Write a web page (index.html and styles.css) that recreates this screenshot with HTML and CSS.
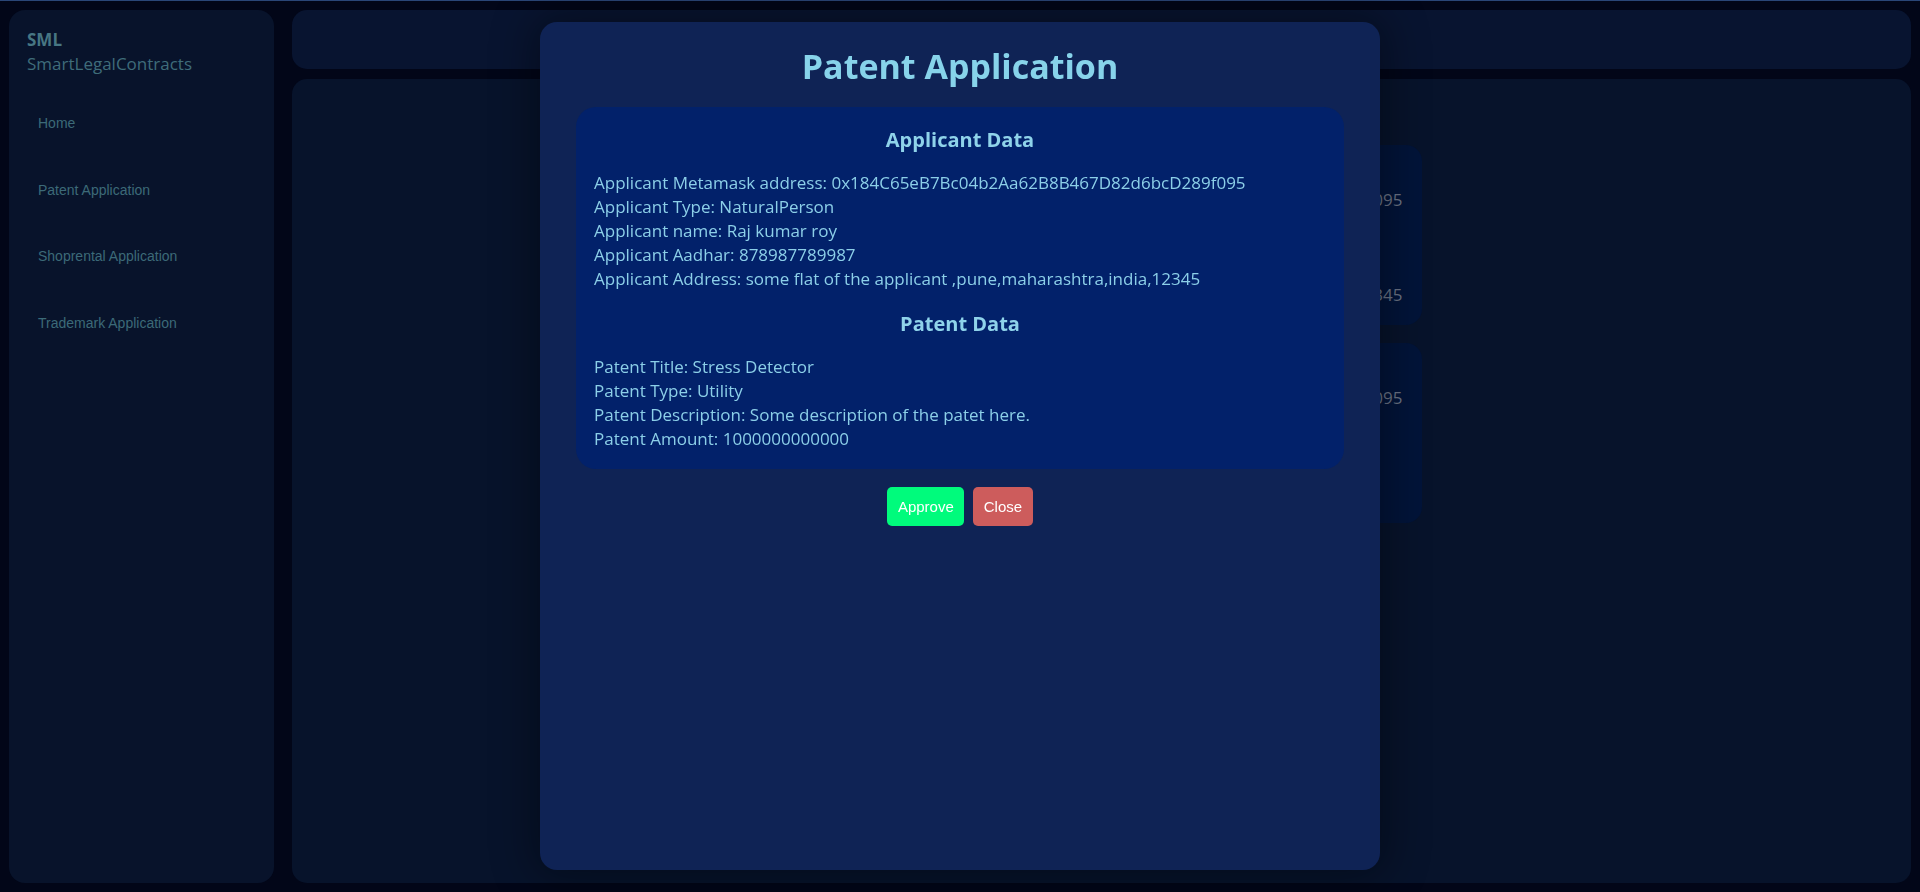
FILE: index.html
```html
<!DOCTYPE html>
<html lang="en">
<head>
<meta charset="utf-8">
<title>SmartLegalContracts</title>
<link rel="stylesheet" href="styles.css">
</head>
<body>
<div class="topline"></div>
<div class="app">
  <aside class="sidebar">
    <div class="brand">
      <div class="brand-short">SML</div>
      <div class="brand-long">SmartLegalContracts</div>
    </div>
    <nav class="nav">
      <a class="nav-item">Home</a>
      <a class="nav-item">Patent Application</a>
      <a class="nav-item">Shoprental Application</a>
      <a class="nav-item">Trademark Application</a>
    </nav>
  </aside>
  <div class="maincol">
    <header class="topbar"></header>
    <main class="panel">
      <div class="cards">
        <div class="card">
          <div class="card-row"><span>0x184C65eB7Bc04b2Aa62B8B467D82d6bcD289f095</span></div>
          <div class="card-gap"></div>
          <div class="card-row"><span>pune,maharashtra,india,12345</span></div>
        </div>
        <div class="card">
          <div class="card-row"><span>0x184C65eB7Bc04b2Aa62B8B467D82d6bcD289f095</span></div>
        </div>
      </div>
    </main>
  </div>
</div>

<div class="overlay">
  <div class="modal">
    <h1 class="modal-title">Patent Application</h1>
    <div class="data-box">
      <h3 class="section-title">Applicant Data</h3>
      <p class="line">Applicant Metamask address: 0x184C65eB7Bc04b2Aa62B8B467D82d6bcD289f095</p>
      <p class="line">Applicant Type: NaturalPerson</p>
      <p class="line">Applicant name: Raj kumar roy</p>
      <p class="line">Applicant Aadhar: 878987789987</p>
      <p class="line">Applicant Address: some flat of the applicant ,pune,maharashtra,india,12345</p>
      <h3 class="section-title second">Patent Data</h3>
      <p class="line">Patent Title: Stress Detector</p>
      <p class="line">Patent Type: Utility</p>
      <p class="line">Patent Description: Some description of the patet here.</p>
      <p class="line">Patent Amount: 1000000000000</p>
    </div>
    <div class="actions">
      <button class="btn btn-approve">Approve</button>
      <button class="btn btn-close">Close</button>
    </div>
  </div>
</div>
</body>
</html>
```
FILE: styles.css
```css
* { box-sizing: border-box; }

html, body {
  margin: 0;
  height: 100%;
}

body {
  background: #020618;
  font-family: "Open Sans", "Noto Sans", sans-serif;
  overflow: hidden;
}

.topline {
  height: 1px;
  background: #2a4677;
}

.app {
  height: calc(100vh - 1px);
  display: flex;
  gap: 18px;
  padding: 9px 9px 9px 9px;
}

.sidebar {
  width: 265px;
  flex: none;
  background: #08132b;
  border-radius: 16px;
}

.brand {
  padding: 18px 18px 0 18px;
  font-size: 17px;
  line-height: 24px;
  color: #3f6c7a;
}

.brand-short {
  font-weight: 700;
  color: #477683;
}

.nav {
  margin-top: 14px;
  display: flex;
  flex-direction: column;
}

.nav-item {
  display: block;
  padding: 25px 29px;
  font-family: "Liberation Sans", Arial, sans-serif;
  font-size: 14px;
  line-height: 16.67px;
  color: #3c6a78;
}

.maincol {
  flex: 1;
  display: flex;
  flex-direction: column;
  gap: 10px;
}

.topbar {
  height: 59px;
  flex: none;
  background: #081430;
  border-radius: 15px;
}

.panel {
  flex: 1;
  background: #07132b;
  border-radius: 15px;
  padding-top: 66px;
}

.cards {
  width: 640px;
  margin: 0 auto;
  display: flex;
  flex-direction: column;
  gap: 18px;
}

.card {
  height: 180px;
  background: #021439;
  border-radius: 16px;
  padding: 43px 19px 0 19px;
  font-size: 17px;
  line-height: 24px;
  color: #6a7385;
  overflow: hidden;
}

.card-row {
  display: flex;
  justify-content: flex-end;
  white-space: nowrap;
}

.card-gap { height: 71px; }

.overlay {
  position: fixed;
  inset: 0;
  display: flex;
  align-items: center;
  justify-content: center;
}

.modal {
  width: 840px;
  height: 848px;
  background: #0f2355;
  border-radius: 17px;
  padding: 21px 36px;
  box-shadow: 0 0 40px 8px rgba(0, 0, 0, 0.35);
}

.modal-title {
  margin: 0 0 18px 0;
  text-align: center;
  font-size: 34px;
  line-height: 46px;
  font-weight: 700;
  color: #87d3ea;
}

.data-box {
  background: #02216a;
  border-radius: 20px;
  padding: 19px 18px 18px 18px;
  color: #8ccfe8;
}

.section-title {
  margin: 0 0 17px 0;
  text-align: center;
  font-size: 20px;
  line-height: 28px;
  font-weight: 700;
  color: #8fd3ea;
}

.section-title.second { margin-top: 19px; }

.line {
  margin: 0;
  font-size: 17px;
  line-height: 24px;
  white-space: nowrap;
}

.actions {
  margin-top: 18px;
  display: flex;
  justify-content: center;
  gap: 9px;
}

.btn {
  height: 39px;
  padding: 0 10.5px;
  border: none;
  border-radius: 5px;
  font-family: "Liberation Sans", Arial, sans-serif;
  font-size: 15px;
  color: #ffffff;
}

.btn-approve { background: #00fb7c; }
.btn-close { background: #cd5c5c; }
```
